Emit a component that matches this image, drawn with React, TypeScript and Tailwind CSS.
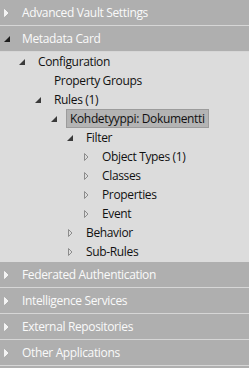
import React from 'react';

type Node = {
  label: string;
  expanded?: boolean;
  selected?: boolean;
  children?: Node[];
  leaf?: boolean;
};

const tree: Node[] = [
  {
    label: 'Configuration',
    expanded: true,
    children: [
      { label: 'Property Groups', leaf: true },
      {
        label: 'Rules (1)',
        expanded: true,
        children: [
          {
            label: 'Kohdetyyppi: Dokumentti',
            expanded: true,
            selected: true,
            children: [
              {
                label: 'Filter',
                expanded: true,
                children: [
                  { label: 'Object Types (1)' },
                  { label: 'Classes' },
                  { label: 'Properties' },
                  { label: 'Event' },
                ],
              },
              { label: 'Behavior' },
              { label: 'Sub-Rules' },
            ],
          },
        ],
      },
    ],
  },
];

function ExpandedArrow({ color = '#3a3a3a' }: { color?: string }) {
  return (
    <svg width="6" height="6" viewBox="0 0 6 6">
      <path d="M6 0 L6 6 L0 6 Z" fill={color} />
    </svg>
  );
}

function CollapsedArrow({ fill = 'none', stroke = '#8c8c8c' }: { fill?: string; stroke?: string }) {
  return (
    <svg width="5" height="8" viewBox="0 0 5 8">
      <path d="M0.5 0.5 L4 4 L0.5 7.5 Z" fill={fill} stroke={stroke} strokeWidth="1" />
    </svg>
  );
}

function TreeRow({ node }: { node: Node }) {
  return (
    <div>
      <div className="flex h-[19px] items-center">
        <div className="flex w-[34px] justify-end pr-[9px]">
          {node.leaf ? null : node.expanded ? <ExpandedArrow /> : <CollapsedArrow />}
        </div>
        <span
          className={
            node.selected
              ? 'border border-[#9c9c9c] bg-[#b4b4b4] px-[3px] leading-[17px]'
              : 'border border-transparent px-[3px] leading-[17px]'
          }
        >
          {node.label}
        </span>
      </div>
      {node.expanded && node.children && (
        <div className="pl-4">
          {node.children.map((c) => (
            <TreeRow key={c.label} node={c} />
          ))}
        </div>
      )}
    </div>
  );
}

function Header({ label, expanded }: { label: string; expanded?: boolean }) {
  return (
    <div className="flex h-[26px] items-center border-b border-[#d6d6d6] bg-[#afafaf] pl-[3px] text-[#fafafa]">
      <div className="flex w-[19px] items-center pl-[1px]">
        {expanded ? <ExpandedArrow color="#1e1e1e" /> : <CollapsedArrow fill="#f4f4f4" stroke="#f4f4f4" />}
      </div>
      <span className="pt-px">{label}</span>
    </div>
  );
}

export default function App() {
  return (
    <div
      className="flex h-[368px] w-[249px] flex-col overflow-hidden bg-[#afafaf] text-[12px] tracking-[-0.35px]"
      style={{ fontFamily: '"Open Sans", "Noto Sans", sans-serif' }}
    >
      <Header label="Advanced Vault Settings" />
      <Header label="Metadata Card" expanded />
      <div className="bg-[#dcdcdc] pb-px text-[#111]">
        {tree.map((n) => (
          <TreeRow key={n.label} node={n} />
        ))}
      </div>
      <Header label="Federated Authentication" />
      <Header label="Intelligence Services" />
      <Header label="External Repositories" />
      <Header label="Other Applications" />
    </div>
  );
}
